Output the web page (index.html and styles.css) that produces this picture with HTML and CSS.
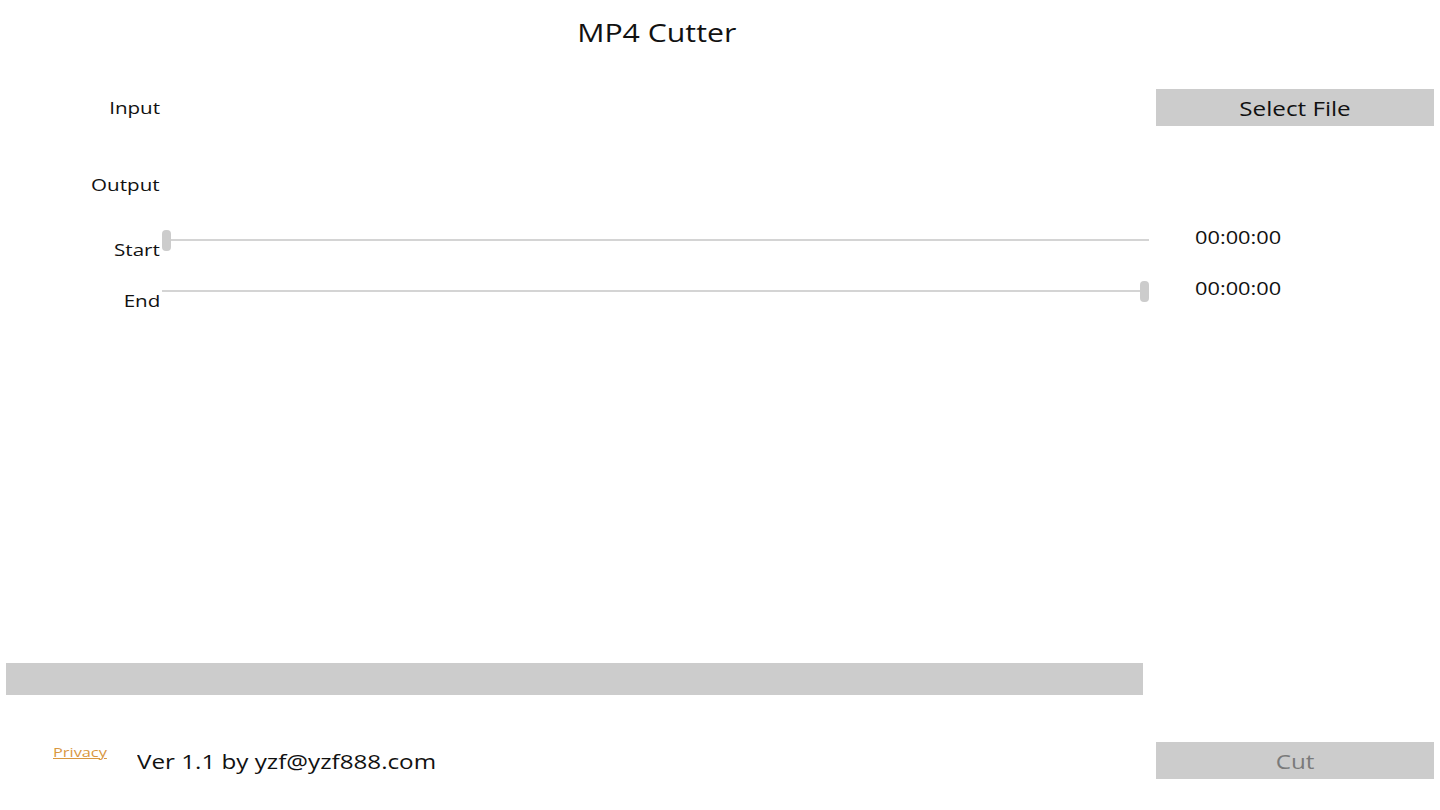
FILE: index.html
```html
<!DOCTYPE html>
<html>
<head>
<meta charset="utf-8">
<link rel="stylesheet" href="styles.css">
</head>
<body>
<div class="app">
  <div class="title-row"><h1 class="title"><span class="wide wide-c">MP4 Cutter</span></h1></div>
  <div class="row row-input">
    <div class="label"><span class="wide wide-r">Input</span></div>
    <div class="spacer"></div>
    <button class="btn btn-select"><span class="wide wide-c">Select File</span></button>
  </div>
  <div class="row row-output">
    <div class="label"><span class="wide wide-r">Output</span></div>
  </div>
  <div class="row row-start">
    <div class="label label-low"><span class="wide wide-r">Start</span></div>
    <div class="slider"><div class="track"></div><div class="thumb thumb-left"></div></div>
    <div class="time"><span class="wide wide-l">00:00:00</span></div>
  </div>
  <div class="row row-end">
    <div class="label label-low"><span class="wide wide-r">End</span></div>
    <div class="slider"><div class="track"></div><div class="thumb thumb-right"></div></div>
    <div class="time"><span class="wide wide-l">00:00:00</span></div>
  </div>
  <div class="fill"></div>
  <div class="progress-row"><div class="progress"></div></div>
  <div class="footer">
    <a class="privacy" href="#"><span class="wide wide-l privacy-text">Privacy</span></a>
    <div class="ver"><span class="wide wide-l">Ver 1.1 by yzf@yzf888.com</span></div>
    <div class="spacer"></div>
    <button class="btn btn-cut"><span class="wide wide-c">Cut</span></button>
  </div>
</div>
</body>
</html>
```
FILE: styles.css
```css
html, body {
  margin: 0;
  padding: 0;
  background: #ffffff;
}
body {
  width: 1440px;
  height: 810px;
  overflow: hidden;
  font-family: "Open Sans", "Noto Sans", sans-serif;
  color: #111111;
}
.wide {
  display: inline-block;
  transform: scaleX(1.21);
}
.wide-c { transform-origin: center; }
.wide-r { transform-origin: right center; }
.wide-l { transform-origin: left center; }
.app {
  display: flex;
  flex-direction: column;
  height: 810px;
}
.title-row {
  display: flex;
  justify-content: center;
  width: 1313px;
  padding-top: 13px;
  height: 38px;
}
.title {
  margin: 0;
  font-size: 25px;
  font-weight: 400;
  line-height: 38px;
}
.row {
  display: flex;
  align-items: center;
}
.label {
  width: 160px;
  text-align: right;
  font-size: 17px;
  flex: none;
}
.spacer { flex: 1; }
.row-input {
  margin-top: 38px;
  height: 37px;
  padding-right: 6px;
}
.btn {
  font-family: inherit;
  border: none;
  background: #cccccc;
  width: 278px;
  height: 37px;
  font-size: 20px;
  color: #111111;
  padding: 0;
  flex: none;
}
.btn-select { padding-top: 2px; }
.row-output {
  margin-top: 40px;
  height: 36px;
}
.row-start {
  margin-top: 18px;
  height: 40px;
}
.row-end {
  margin-top: 11px;
  height: 40px;
}
.label-low {
  align-self: flex-end;
  line-height: 24px;
  margin-bottom: -2px;
}
.slider {
  position: relative;
  width: 987px;
  height: 40px;
  margin-left: 2px;
  flex: none;
}
.track {
  position: absolute;
  left: 0;
  right: 0;
  top: 19px;
  height: 2px;
  background: #d4d4d4;
}
.thumb {
  position: absolute;
  top: 10px;
  width: 9px;
  height: 21px;
  border-radius: 4px;
  background: #cccccc;
}
.thumb-left { left: 0; }
.thumb-right { right: 0; }
.time {
  margin-left: 46px;
  font-size: 18px;
  line-height: 24px;
  align-self: flex-start;
  margin-top: 5px;
}
.fill { flex: 1; }
.progress-row {
  padding-left: 6px;
  height: 32px;
}
.progress {
  width: 1137px;
  height: 32px;
  background: #cccccc;
}
.footer {
  display: flex;
  align-items: center;
  margin-top: 47px;
  height: 36px;
  margin-bottom: 32px;
  padding-right: 6px;
}
.privacy {
  margin-left: 53px;
  font-size: 13.5px;
  color: #d9973f;
  text-decoration: none;
  align-self: flex-start;
  margin-top: 1px;
}
.privacy-text {
  text-decoration: underline;
}
.ver {
  margin-left: 39px;
  font-size: 20px;
  margin-top: 2px;
}
.btn-cut {
  color: #7a7a7a;
  padding-top: 2px;
}
```
